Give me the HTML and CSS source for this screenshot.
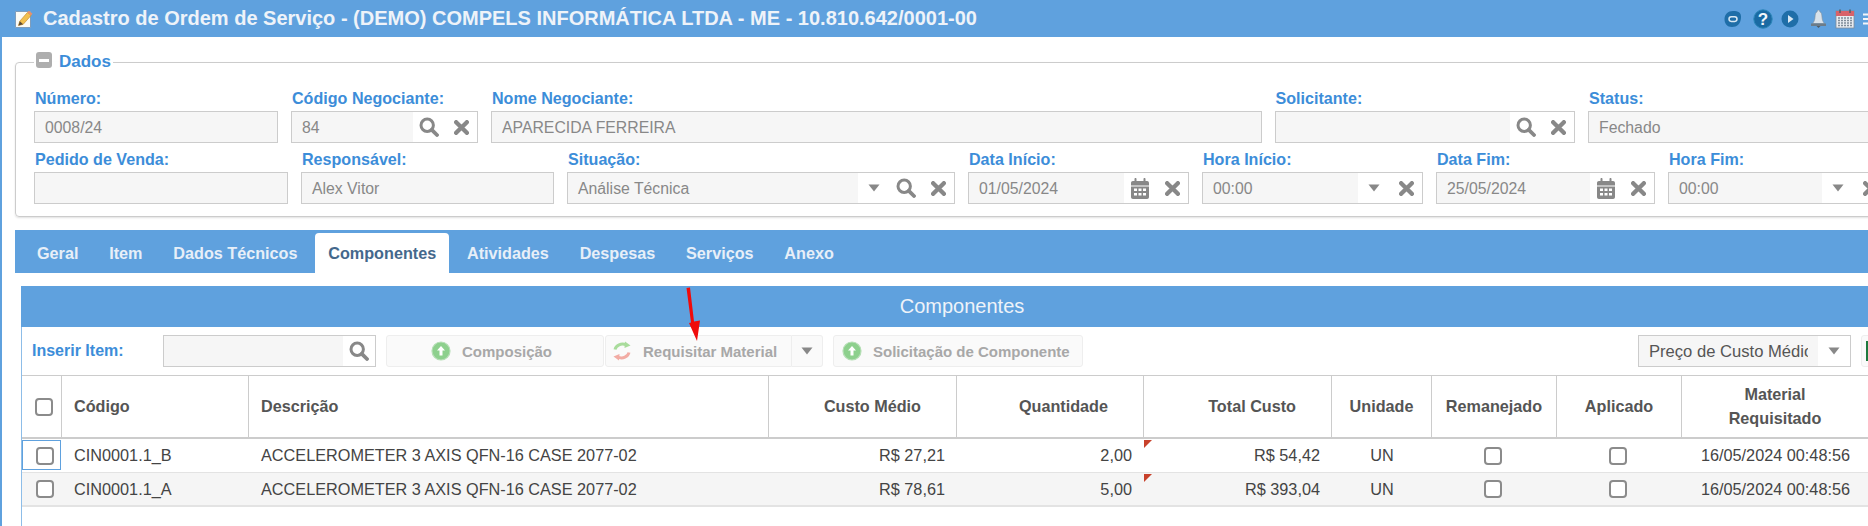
FILE: index.html
```html
<!DOCTYPE html>
<html lang="pt-BR">
<head>
    <meta charset="UTF-8">
    <title>Cadastro de Ordem de Serviço</title>
    <link rel="stylesheet" href="styles.css">
</head>
<body>
    <svg class="icon-defs" aria-hidden="true">
        <symbol id="i-search" viewBox="0 0 20 20">
            <circle cx="8.2" cy="8.2" r="6.2" fill="none" stroke="currentColor" stroke-width="3"/>
            <path d="M12.8 12.8L18 18" fill="none" stroke="currentColor" stroke-width="3.8" stroke-linecap="round"/>
        </symbol>
        <symbol id="i-close" viewBox="0 0 14 14">
            <path d="M2 2L12 12M12 2L2 12" fill="none" stroke="currentColor" stroke-width="4" stroke-linecap="round"/>
        </symbol>
        <symbol id="i-caret" viewBox="0 0 12 8">
            <path d="M0.5 0.5H11.5L6 7.5Z" fill="currentColor"/>
        </symbol>
        <symbol id="i-calendar" viewBox="0 0 18 21">
            <path fill="currentColor" fill-rule="evenodd" d="M0 5C0 3.900 .8 3 1.900 3H3.500V1C3.500 .4 3.900 0 4.500 0S5.500 .4 5.500 1V3H12.500V1C12.500 .4 12.900 0 13.500 0S14.500 .4 14.500 1V3H16.100C17.200 3 18 3.900 18 5V7.500H0ZM0 8.500H18V19C18 20.100 17.200 21 16.100 21H1.900C.8 21 0 20.100 0 19ZM3 10.500V13H6V10.500ZM7.500 10.500V13H10.500V10.500ZM12 10.500V13H15V10.500ZM3 15V17.500H6V15ZM7.500 15V17.500H10.500V15ZM12 15V17.500H15V15Z"/>
        </symbol>
        <symbol id="i-add" viewBox="0 0 20 20">
            <circle cx="10" cy="10" r="9" fill="#8dd08d"/>
            <circle cx="10" cy="10" r="9" fill="none" stroke="#b5deb5" stroke-width="1.2"/>
            <path d="M10 5L14 9.500H11.500V14.500H8.500V9.500H6Z" fill="#fff"/>
        </symbol>
    </svg>

    <div class="title-bar">
        <svg class="title-icon" viewBox="0 0 18 18">
            <path d="M.5 1.500H15.500V17.500H.5Z" fill="#fbfbf6" stroke="#7f9dbb" stroke-width="1"/>
            <path d="M3.500 15.500L4.800 11.200L12.400 2.500L16 5.500L8.200 14.300Z" fill="#f2c04e" stroke="#c98d2a" stroke-width=".7"/>
            <path d="M12.400 2.500L13.800 .8L17.500 3.800L16 5.500Z" fill="#e8916b"/>
            <path d="M3.500 15.500L4.800 11.200L8.200 14.300Z" fill="#5b4a36"/>
        </svg>
        <h1 class="title-text">Cadastro de Ordem de Serviço - (DEMO) COMPELS INFORMÁTICA LTDA - ME - 10.810.642/0001-00</h1>
        <div class="title-actions">
            <svg class="top-icon top-chat" viewBox="0 0 18 18">
                <path d="M9 1C14 1 17.500 2 17 8C16.500 14 13 17 8 17C3 17 .5 13.500 .5 9C.5 4.500 4 1 9 1Z" fill="#1f6ea8"/>
                <rect x="5" y="6.800" width="8" height="4.600" rx="2.300" fill="none" stroke="#dbe9f4" stroke-width="1.500"/>
            </svg>
            <svg class="top-icon top-help" viewBox="0 0 20 20">
                <circle cx="10" cy="10" r="9.200" fill="#1a6aa3" stroke="#2a86b8" stroke-width="1"/>
                <text x="10" y="15.800" class="help-mark">?</text>
            </svg>
            <svg class="top-icon top-play" viewBox="0 0 18 18">
                <circle cx="9" cy="9" r="8.500" fill="#1f6ea8"/>
                <path d="M7 5L12.500 9L7 13Z" fill="#dbe9f4"/>
            </svg>
            <svg class="top-icon top-bell" viewBox="0 0 17 18">
                <path d="M8.500 0C9.500 0 9.800 1 9.800 1.800C11.500 2.500 11.800 4 12 7C12.200 10 13 12 14.500 13.500H2.500C4 12 4.800 10 5 7C5.200 4 5.500 2.500 7.200 1.800C7.200 1 7.500 0 8.500 0Z" fill="#d8e2ea" stroke="#7d8d9a" stroke-width=".6"/>
                <path d="M1 13.500H16V16H1Z" fill="#6c7c89"/>
                <path d="M6.500 16H10.500L8.500 18Z" fill="#4f5c66"/>
            </svg>
            <svg class="top-icon top-calendar" viewBox="0 0 20 20">
                <rect x="1" y="2" width="18" height="17" fill="#e8ecf1" stroke="#7f8c98" stroke-width=".8"/>
                <rect x="1" y="2" width="18" height="5" fill="#d8626a"/>
                <path d="M5 .5V4M15 .5V4" stroke="#55606a" stroke-width="1.600"/>
                <path d="M3 9H17M3 11.500H17M3 14H17M3 16.500H17" stroke="#7f8c99" stroke-width="1.300" stroke-dasharray="2 1"/>
            </svg>
            <svg class="top-icon top-menu" viewBox="0 0 5 14">
                <path d="M0 2.500H5M0 7H5M0 11.500H5" stroke="#f2f6fa" stroke-width="2.200"/>
            </svg>
        </div>
    </div>

    <div class="content">
        <fieldset class="data-box">
            <legend class="data-legend">
                <span class="collapse-btn"></span>
                <span>Dados</span>
            </legend>

            <div class="field-row row-a">
                <div class="form-group">
                    <label>Número:</label>
                    <div class="field"><span class="field-value">0008/24</span></div>
                </div>
                <div class="form-group">
                    <label>Código Negociante:</label>
                    <div class="field">
                        <span class="field-value">84</span>
                        <span class="field-btn"><svg class="ico ico-search"><use href="#i-search"/></svg></span>
                        <span class="field-btn"><svg class="ico ico-close"><use href="#i-close"/></svg></span>
                    </div>
                </div>
                <div class="form-group">
                    <label>Nome Negociante:</label>
                    <div class="field"><span class="field-value">APARECIDA FERREIRA</span></div>
                </div>
                <div class="form-group">
                    <label>Solicitante:</label>
                    <div class="field">
                        <span class="field-value"></span>
                        <span class="field-btn"><svg class="ico ico-search"><use href="#i-search"/></svg></span>
                        <span class="field-btn"><svg class="ico ico-close"><use href="#i-close"/></svg></span>
                    </div>
                </div>
                <div class="form-group">
                    <label>Status:</label>
                    <div class="field"><span class="field-value">Fechado</span></div>
                </div>
            </div>

            <div class="field-row row-b">
                <div class="form-group">
                    <label>Pedido de Venda:</label>
                    <div class="field"><span class="field-value"></span></div>
                </div>
                <div class="form-group">
                    <label>Responsável:</label>
                    <div class="field"><span class="field-value">Alex Vitor</span></div>
                </div>
                <div class="form-group">
                    <label>Situação:</label>
                    <div class="field">
                        <span class="field-value">Análise Técnica</span>
                        <span class="field-btn"><svg class="ico ico-caret"><use href="#i-caret"/></svg></span>
                        <span class="field-btn"><svg class="ico ico-search"><use href="#i-search"/></svg></span>
                        <span class="field-btn"><svg class="ico ico-close"><use href="#i-close"/></svg></span>
                    </div>
                </div>
                <div class="form-group">
                    <label>Data Início:</label>
                    <div class="field">
                        <span class="field-value">01/05/2024</span>
                        <span class="field-btn"><svg class="ico ico-calendar"><use href="#i-calendar"/></svg></span>
                        <span class="field-btn"><svg class="ico ico-close"><use href="#i-close"/></svg></span>
                    </div>
                </div>
                <div class="form-group">
                    <label>Hora Início:</label>
                    <div class="field">
                        <span class="field-value">00:00</span>
                        <span class="field-btn"><svg class="ico ico-caret"><use href="#i-caret"/></svg></span>
                        <span class="field-btn"><svg class="ico ico-close"><use href="#i-close"/></svg></span>
                    </div>
                </div>
                <div class="form-group">
                    <label>Data Fim:</label>
                    <div class="field">
                        <span class="field-value">25/05/2024</span>
                        <span class="field-btn"><svg class="ico ico-calendar"><use href="#i-calendar"/></svg></span>
                        <span class="field-btn"><svg class="ico ico-close"><use href="#i-close"/></svg></span>
                    </div>
                </div>
                <div class="form-group">
                    <label>Hora Fim:</label>
                    <div class="field">
                        <span class="field-value">00:00</span>
                        <span class="field-btn"><svg class="ico ico-caret"><use href="#i-caret"/></svg></span>
                        <span class="field-btn"><svg class="ico ico-close"><use href="#i-close"/></svg></span>
                    </div>
                </div>
            </div>
        </fieldset>

        <div class="tabs">
            <a class="tab">Geral</a>
            <a class="tab">Item</a>
            <a class="tab">Dados Técnicos</a>
            <a class="tab active">Componentes</a>
            <a class="tab">Atividades</a>
            <a class="tab">Despesas</a>
            <a class="tab">Serviços</a>
            <a class="tab">Anexo</a>
        </div>

        <div class="panel">
            <div class="panel-header">Componentes</div>

            <div class="toolbar">
                <span class="toolbar-label">Inserir Item:</span>
                <div class="field field-insert">
                    <span class="field-value"></span>
                    <span class="field-btn"><svg class="ico ico-search"><use href="#i-search"/></svg></span>
                </div>
                <button class="btn btn-composicao" disabled>
                    <svg class="btn-icon"><use href="#i-add"/></svg>Composição
                </button>
                <div class="btn-split">
                    <button class="btn btn-requisitar" disabled>
                        <svg class="btn-icon" viewBox="0 0 20 20">
                            <path d="M3 8.500C4 4.500 9 1.500 14.500 4" fill="none" stroke="#a9dc9c" stroke-width="3"/>
                            <path d="M13 .5L18.500 4.500L12.500 7Z" fill="#a9dc9c"/>
                            <path d="M17 11.500C16 15.500 11 18.500 5.500 16" fill="none" stroke="#f2aca4" stroke-width="3"/>
                            <path d="M7 19.500L1.500 15.500L7.500 13Z" fill="#f2aca4"/>
                        </svg>Requisitar Material
                    </button>
                    <button class="btn btn-arrow" disabled><svg class="ico ico-caret"><use href="#i-caret"/></svg></button>
                </div>
                <button class="btn btn-solicitacao" disabled>
                    <svg class="btn-icon"><use href="#i-add"/></svg>Solicitação de Componente
                </button>

                <div class="toolbar-right">
                    <div class="field field-price">
                        <span class="field-value"><span class="price-text">Preço de Custo Médio</span></span>
                        <span class="field-btn"><svg class="ico ico-caret"><use href="#i-caret"/></svg></span>
                    </div>
                    <button class="btn btn-excel"><span class="excel-mark"></span></button>
                </div>
            </div>

            <table class="grid">
                <colgroup>
                    <col class="c-check"><col class="c-code"><col class="c-desc"><col class="c-cost"><col class="c-qty">
                    <col class="c-total"><col class="c-unit"><col class="c-moved"><col class="c-applied"><col class="c-req">
                </colgroup>
                <thead>
                    <tr>
                        <th class="center check-cell-first"><span class="check"></span></th>
                        <th>Código</th>
                        <th>Descrição</th>
                        <th class="num">Custo Médio</th>
                        <th class="num">Quantidade</th>
                        <th class="num">Total Custo</th>
                        <th class="center">Unidade</th>
                        <th class="center">Remanejado</th>
                        <th class="center">Aplicado</th>
                        <th class="center">Material<br>Requisitado</th>
                    </tr>
                </thead>
                <tbody>
                    <tr>
                        <td class="center check-cell-first focused"><span class="check"></span></td>
                        <td>CIN0001.1_B</td>
                        <td>ACCELEROMETER 3 AXIS QFN-16 CASE 2077-02</td>
                        <td class="num">R$ 27,21</td>
                        <td class="num">2,00</td>
                        <td class="num flagged">R$ 54,42</td>
                        <td class="center">UN</td>
                        <td class="center check-cell"><span class="check"></span></td>
                        <td class="center check-cell"><span class="check"></span></td>
                        <td class="center">16/05/2024 00:48:56</td>
                    </tr>
                    <tr class="alt">
                        <td class="center check-cell-first"><span class="check"></span></td>
                        <td>CIN0001.1_A</td>
                        <td>ACCELEROMETER 3 AXIS QFN-16 CASE 2077-02</td>
                        <td class="num">R$ 78,61</td>
                        <td class="num">5,00</td>
                        <td class="num flagged">R$ 393,04</td>
                        <td class="center">UN</td>
                        <td class="center check-cell"><span class="check"></span></td>
                        <td class="center check-cell"><span class="check"></span></td>
                        <td class="center">16/05/2024 00:48:56</td>
                    </tr>
                </tbody>
            </table>

            <svg class="red-arrow" viewBox="0 0 16 56">
                <path d="M.5 1L4 .5L8 34.500L14 33.500L11 54L3 36L5 35.500Z" fill="#f00b0b"/>
            </svg>
        </div>
    </div>
</body>
</html>
```

FILE: styles.css
```css
* {
    margin: 0;
    padding: 0;
    box-sizing: border-box;
}

html, body {
    height: 526px;
    overflow: hidden;
}

body {
    font-family: "Liberation Sans", Arial, sans-serif;
    font-size: 16px;
    color: #444;
    background: white;
    border-left: 2px solid #5fa1de;
}

.icon-defs {
    display: none;
}

/* title bar */
.title-bar {
    display: flex;
    align-items: center;
    height: 37px;
    padding-left: 13px;
    background: #5fa1de;
}

.title-icon {
    width: 18px;
    height: 18px;
    margin-right: 10px;
    flex: none;
}

.title-text {
    font-size: 20px;
    font-weight: bold;
    color: #eef3f9;
    white-space: nowrap;
}

.title-actions {
    display: flex;
    align-items: center;
    gap: 8px;
    margin-left: auto;
}

.top-icon {
    display: block;
    flex: none;
}

.top-chat, .top-play {
    width: 18px;
    height: 18px;
}

.top-help {
    width: 20px;
    height: 20px;
    margin-left: 3px;
}

.top-bell {
    width: 17px;
    height: 18px;
    margin-left: 3px;
}

.top-calendar {
    width: 20px;
    height: 20px;
}

.top-menu {
    width: 5px;
    height: 14px;
}

.help-mark {
    font-size: 17px;
    font-weight: bold;
    fill: #f2f7fb;
    text-anchor: middle;
}

/* data box */
.content {
    padding-left: 13px;
    width: 1920px;
}

.data-box {
    margin-top: 15px;
    height: 165px;
    padding: 19px 0 0 18px;
    border: 1px solid #ccc;
    border-radius: 4px;
    box-shadow: 0 1px 2px rgba(0,0,0,0.12);
}

.data-legend {
    display: flex;
    align-items: center;
    gap: 7px;
    height: 20px;
    margin-left: 0;
    padding: 0 2px;
    font-size: 17px;
    font-weight: bold;
    color: #3c8dd9;
}

.collapse-btn {
    position: relative;
    width: 16px;
    height: 16px;
    margin-top: -4px;
    border-radius: 3px;
    background: #aeaeae;
}

.collapse-btn::after {
    content: "";
    position: absolute;
    left: 3px;
    right: 3px;
    top: 7px;
    height: 3px;
    background: white;
}

.field-row {
    display: grid;
    column-gap: 13px;
}

.row-a {
    grid-template-columns: 244px 187px 770.5px 300.5px 290px;
}

.row-b {
    margin-top: 9px;
    grid-template-columns: 254px 253px 388px 221px 221px 219px 219px;
}

label {
    display: block;
    height: 20px;
    padding-left: 1px;
    font-size: 16.1px;
    font-weight: bold;
    line-height: 15px;
    color: #3c8dd9;
    white-space: nowrap;
}

.field {
    display: flex;
    align-items: stretch;
    height: 32px;
    border: 1px solid #ccc;
    background: white;
}

.field-value {
    flex: 1;
    min-width: 0;
    padding-left: 10px;
    font-size: 15.8px;
    line-height: 31px;
    color: #888;
    background: #f6f6f6;
    white-space: nowrap;
    overflow: hidden;
}

.field-btn {
    display: flex;
    align-items: center;
    justify-content: center;
    flex: none;
    width: 32px;
    color: #888;
}

.ico {
    display: block;
    flex: none;
}

.ico-search {
    width: 20px;
    height: 20px;
}

.ico-close {
    width: 15px;
    height: 15px;
}

.ico-caret {
    width: 12px;
    height: 8px;
}

.ico-calendar {
    width: 18px;
    height: 21px;
}

/* tabs */
.tabs {
    display: flex;
    align-items: flex-end;
    gap: 4.8px;
    height: 43px;
    margin-top: 13px;
    padding-left: 9px;
    background: #5fa1de;
}

.tab {
    height: 40px;
    padding: 0 13px;
    font-size: 16.2px;
    font-weight: bold;
    line-height: 40px;
    color: #e7eff8;
    white-space: nowrap;
}

.tab.active {
    color: #44688c;
    background: white;
    border-radius: 4px 4px 0 0;
}

/* grid panel */
.panel {
    position: relative;
    width: 1882px;
    height: 240px;
    margin-top: 13px;
    margin-left: 6px;
    border-left: 1px solid #8dbde8;
}

.panel-header {
    height: 41px;
    margin-left: -1px;
    font-size: 20px;
    line-height: 41px;
    text-align: center;
    color: #eef3f9;
    background: #5fa1de;
}

.toolbar {
    display: flex;
    align-items: center;
    height: 48px;
    padding-left: 10px;
    padding-right: 7px;
}

.toolbar-label {
    width: 131px;
    flex: none;
    font-weight: bold;
    color: #3c8dd9;
}

.field-insert {
    width: 213px;
    flex: none;
}

.btn {
    display: flex;
    align-items: center;
    height: 32px;
    font-family: inherit;
    font-size: 15px;
    font-weight: bold;
    color: #a8a8a8;
    background: #fafafa;
    border: 1px solid #eee;
    border-radius: 3px;
}

.btn-icon {
    width: 20px;
    height: 20px;
    margin-right: 11px;
    flex: none;
}

.btn-composicao {
    width: 218px;
    margin-left: 10px;
    padding-left: 44px;
}

.btn-split {
    display: flex;
    margin-left: 1px;
}

.btn-requisitar {
    width: 187px;
    padding-left: 6px;
    border-radius: 3px 0 0 3px;
}

.btn-arrow {
    justify-content: center;
    width: 31px;
    color: #888;
    border-left: 0;
    border-radius: 0 3px 3px 0;
}

.btn-solicitacao {
    width: 250px;
    margin-left: 10px;
    padding-left: 8px;
}

.toolbar-right {
    display: flex;
    gap: 10px;
    margin-left: auto;
}

.field-price {
    width: 213px;
}

.field-price .field-value {
    padding-right: 10px;
    color: #555;
}

.price-text {
    display: block;
    font-size: 16.6px;
    overflow: hidden;
}

.btn-excel {
    width: 35px;
    padding-left: 4px;
}

.excel-mark {
    width: 6px;
    height: 20px;
    background: #1d7a3e;
}

.grid {
    width: 1847px;
    table-layout: fixed;
    border-collapse: separate;
    border-spacing: 0;
}

.c-check { width: 40px; }
.c-code { width: 187px; }
.c-desc { width: 520px; }
.c-cost { width: 188px; }
.c-qty { width: 187px; }
.c-total { width: 188px; }
.c-unit { width: 100px; }
.c-moved { width: 125px; }
.c-applied { width: 125px; }
.c-req { width: 187px; }

.grid th {
    height: 64px;
    padding: 0 12px 2px;
    font-size: 16.2px;
    font-weight: bold;
    line-height: 24px;
    text-align: left;
    color: #555;
    border-top: 1px solid #ccc;
    border-bottom: 2px solid #ccc;
    border-right: 1px solid #ccc;
}

.grid td {
    height: 34px;
    padding: 0 12px;
    font-size: 16.25px;
    color: #444;
    border-bottom: 1px solid #e3e3e3;
    white-space: nowrap;
}

.grid tr.alt td {
    background: #f5f5f5;
    border-bottom: 2px solid #e3e3e3;
}

.grid th.num {
    padding-right: 35px;
    text-align: right;
}

.grid td.num {
    text-align: right;
}

.grid th.center {
    padding: 0 0 2px;
    text-align: center;
}

.grid td.center {
    padding: 0;
    text-align: center;
}

.grid th.check-cell-first,
.grid td.check-cell-first {
    padding-left: 5px;
}

.grid td.check-cell {
    padding-right: 4px;
}

.check {
    display: inline-block;
    width: 18px;
    height: 18px;
    vertical-align: middle;
    background: white;
    border: 2px solid #8b8b8b;
    border-radius: 4px;
}

.grid td .check {
    margin-top: -2px;
}

.grid td.focused {
    position: relative;
}

.grid td.focused::after {
    content: "";
    position: absolute;
    left: 0;
    right: 1px;
    top: 1px;
    bottom: 2px;
    border: 1px solid #5fa1de;
}

.grid td.flagged {
    position: relative;
}

.grid td.flagged::before {
    content: "";
    position: absolute;
    left: 0;
    top: 1px;
    border-top: 8px solid #c8412b;
    border-right: 8px solid transparent;
}

.red-arrow {
    position: absolute;
    left: 664px;
    top: 1px;
    width: 16px;
    height: 56px;
}
```
